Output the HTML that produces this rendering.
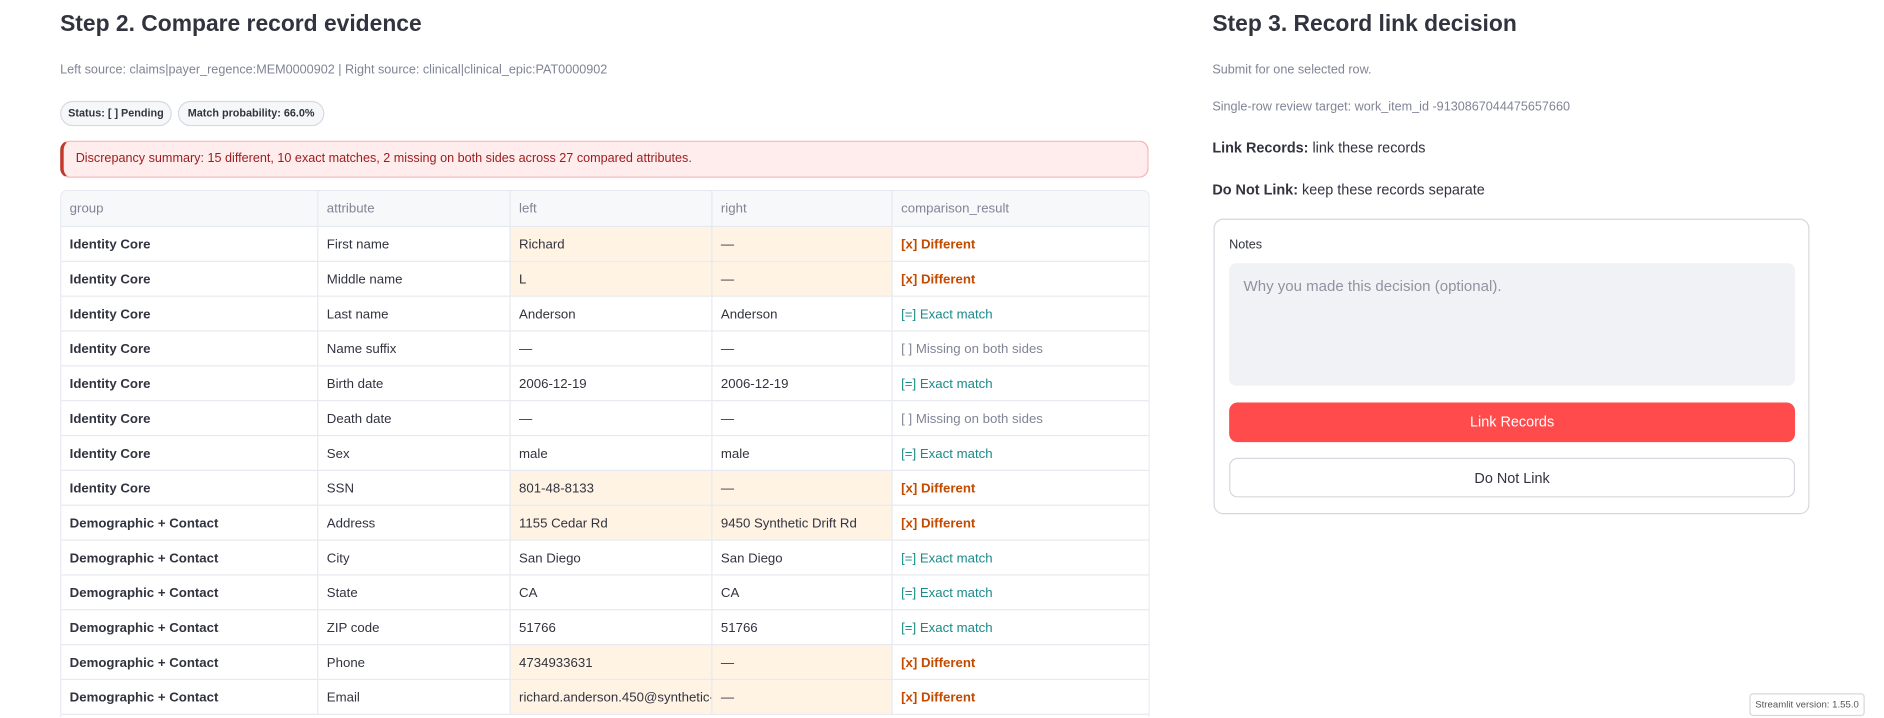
<!DOCTYPE html>
<html><head><meta charset="utf-8"><style>
*{box-sizing:border-box;margin:0;padding:0}
html,body{width:1884px;height:718px;overflow:hidden;background:#fff}
body{font-family:"Liberation Sans",sans-serif;color:#31333f;position:relative}
#clip{position:absolute;left:0;top:0;width:1884px;height:718px;overflow:hidden}
#root{position:absolute;left:0;top:0;width:1568px;height:597px;overflow:hidden;transform:scale(1.2015);transform-origin:0 0}
h2{position:absolute;font-size:19px;font-weight:600;color:#31333f;white-space:nowrap}
.cap{position:absolute;font-size:10.5px;color:#808495;white-space:nowrap}
.pill{position:absolute;top:84px;height:21px;border:1px solid #d5dae5;border-radius:11px;background:#f6f7f9;font-size:9px;font-weight:bold;line-height:19px;text-align:center;color:#31333f;white-space:nowrap}
.alert{position:absolute;left:50px;top:117px;width:906px;height:31px;background:#ffecec;border:1px solid #f5b3b3;border-left:3px solid #c0392b;border-radius:8px;color:#9d1b1b;font-size:10.5px;line-height:29px;padding-left:10px;white-space:nowrap}
table{position:absolute;border-collapse:collapse;font-size:11px;table-layout:fixed}
.wrap{position:absolute;left:50px;top:158px;width:907px;height:439px;border:1px solid #e6e9ef;border-bottom:none;border-radius:6px 6px 0 0;overflow:hidden}
.wrap table{left:-1px;top:-1px;width:908px}
td,th{border:1px solid #e6e9ef;height:29px;padding:1px 7px 0;text-align:left;white-space:nowrap;overflow:hidden}
th{height:30px;background:#f7f8fa;color:#808495;font-weight:normal}
td.g{font-weight:bold}
td.h{background:#fff3e4}
.d{color:#c44a00;font-weight:bold}
.e{color:#1a8a8a}.m{color:#808495}
.t{position:absolute;left:1009px;font-size:12px;white-space:nowrap}
.box{position:absolute;left:1010px;top:182px;width:496px;height:246px;border:1px solid #d5d8de;border-radius:8px}
.ta{position:absolute;left:12px;top:36px;width:471px;height:102px;background:#f0f2f6;border-radius:6px;color:#8f93a0;font-size:12.5px;padding:12px}
.btn{position:absolute;left:12px;width:471px;height:33px;border-radius:7px;text-align:center;line-height:32px;font-size:12px}
</style></head><body><div id="clip"><div id="root">
<h2 style="left:50px;top:10px">Step 2. Compare record evidence</h2>
<div class="cap" style="left:50px;top:52px">Left source: claims|payer_regence:MEM0000902 | Right source: clinical|clinical_epic:PAT0000902</div>
<div class="pill" style="left:50px;width:93px">Status: [ ] Pending</div>
<div class="pill" style="left:148px;width:122px">Match probability: 66.0%</div>
<div class="alert">Discrepancy summary: 15 different, 10 exact matches, 2 missing on both sides across 27 compared attributes.</div>
<div class="wrap"><table>
<colgroup><col style="width:214px"><col style="width:160px"><col style="width:168px"><col style="width:150px"><col style="width:216px"></colgroup>
<tr><th>group</th><th>attribute</th><th>left</th><th>right</th><th>comparison_result</th></tr>
<tr><td class="g">Identity Core</td><td>First name</td><td class="h">Richard</td><td class="h">—</td><td class="d">[x] Different</td></tr>
<tr><td class="g">Identity Core</td><td>Middle name</td><td class="h">L</td><td class="h">—</td><td class="d">[x] Different</td></tr>
<tr><td class="g">Identity Core</td><td>Last name</td><td>Anderson</td><td>Anderson</td><td class="e">[=] Exact match</td></tr>
<tr><td class="g">Identity Core</td><td>Name suffix</td><td>—</td><td>—</td><td class="m">[ ] Missing on both sides</td></tr>
<tr><td class="g">Identity Core</td><td>Birth date</td><td>2006-12-19</td><td>2006-12-19</td><td class="e">[=] Exact match</td></tr>
<tr><td class="g">Identity Core</td><td>Death date</td><td>—</td><td>—</td><td class="m">[ ] Missing on both sides</td></tr>
<tr><td class="g">Identity Core</td><td>Sex</td><td>male</td><td>male</td><td class="e">[=] Exact match</td></tr>
<tr><td class="g">Identity Core</td><td>SSN</td><td class="h">801-48-8133</td><td class="h">—</td><td class="d">[x] Different</td></tr>
<tr><td class="g">Demographic + Contact</td><td>Address</td><td class="h">1155 Cedar Rd</td><td class="h">9450 Synthetic Drift Rd</td><td class="d">[x] Different</td></tr>
<tr><td class="g">Demographic + Contact</td><td>City</td><td>San Diego</td><td>San Diego</td><td class="e">[=] Exact match</td></tr>
<tr><td class="g">Demographic + Contact</td><td>State</td><td>CA</td><td>CA</td><td class="e">[=] Exact match</td></tr>
<tr><td class="g">Demographic + Contact</td><td>ZIP code</td><td>51766</td><td>51766</td><td class="e">[=] Exact match</td></tr>
<tr><td class="g">Demographic + Contact</td><td>Phone</td><td class="h">4734933631</td><td class="h">—</td><td class="d">[x] Different</td></tr>
<tr><td class="g">Demographic + Contact</td><td>Email</td><td class="h">richard.anderson.450@synthetic-</td><td class="h">—</td><td class="d">[x] Different</td></tr>
</table></div>
<h2 style="left:1009px;top:10px">Step 3. Record link decision</h2>
<div class="cap" style="left:1009px;top:52px">Submit for one selected row.</div>
<div class="cap" style="left:1009px;top:83px">Single-row review target: work_item_id -9130867044475657660</div>
<div class="t" style="top:116px"><b>Link Records:</b> link these records</div>
<div class="t" style="top:151px"><b>Do Not Link:</b> keep these records separate</div>
<div class="box">
<div style="position:absolute;left:12px;top:15px;font-size:10.5px">Notes</div>
<div class="ta">Why you made this decision (optional).</div>
<div class="btn" style="top:152px;background:#ff4b4b;color:#fff">Link Records</div>
<div class="btn" style="top:198px;border:1px solid #d5d8de;color:#31333f">Do Not Link</div>
</div>
<div style="position:absolute;left:1456px;top:577px;width:96px;height:19px;border:1px solid #d5d8de;border-radius:3px;font-size:8px;line-height:17px;text-align:center;color:#555;white-space:nowrap;background:#fff">Streamlit version: 1.55.0</div>
</div></div></body></html>
